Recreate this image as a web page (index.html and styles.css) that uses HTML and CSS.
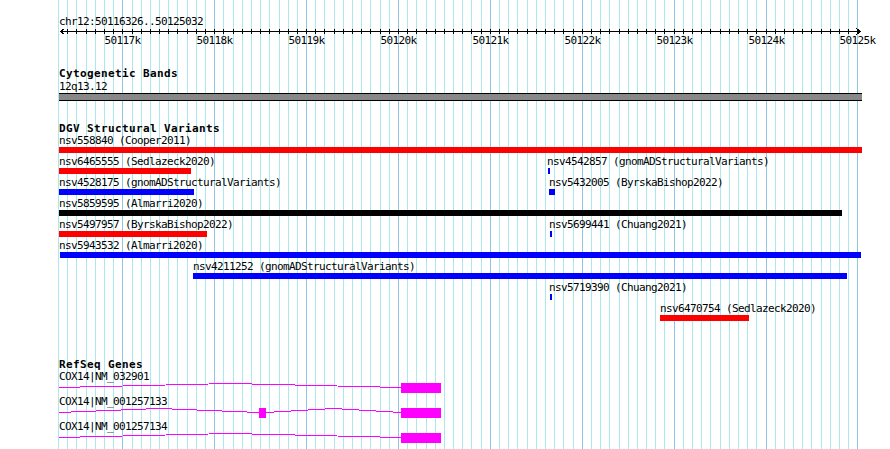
FILE: index.html
```html
<!DOCTYPE html>
<html>
  <head>
    <meta charset="UTF-8">
    <title>chr12:50116326..50125032</title>
    <link rel="stylesheet" href="styles.css">
  </head>
  <body>
    <div class="browser">
      <!-- grid: one line per 100bp, darker every 1kb -->
      <svg class="grid" width="890" height="449" shape-rendering="crispEdges">
        <path class="grid-minor" d="M58.5 0V449M67.5 0V449M76.5 0V449M86.5 0V449M95.5 0V449M104.5 0V449M113.5 0V449M132.5 0V449M141.5 0V449M150.5 0V449M159.5 0V449M168.5 0V449M177.5 0V449M187.5 0V449M196.5 0V449M205.5 0V449M223.5 0V449M233.5 0V449M242.5 0V449M251.5 0V449M260.5 0V449M269.5 0V449M279.5 0V449M288.5 0V449M297.5 0V449M315.5 0V449M324.5 0V449M334.5 0V449M343.5 0V449M352.5 0V449M361.5 0V449M370.5 0V449M380.5 0V449M389.5 0V449M407.5 0V449M416.5 0V449M426.5 0V449M435.5 0V449M444.5 0V449M453.5 0V449M462.5 0V449M471.5 0V449M481.5 0V449M499.5 0V449M508.5 0V449M517.5 0V449M527.5 0V449M536.5 0V449M545.5 0V449M554.5 0V449M563.5 0V449M573.5 0V449M591.5 0V449M600.5 0V449M609.5 0V449M619.5 0V449M628.5 0V449M637.5 0V449M646.5 0V449M655.5 0V449M664.5 0V449M683.5 0V449M692.5 0V449M701.5 0V449M710.5 0V449M720.5 0V449M729.5 0V449M738.5 0V449M747.5 0V449M756.5 0V449M775.5 0V449M784.5 0V449M793.5 0V449M802.5 0V449M811.5 0V449M821.5 0V449M830.5 0V449M839.5 0V449M848.5 0V449"/>
        <path class="grid-major" d="M122.5 0V449M214.5 0V449M306.5 0V449M398.5 0V449M490.5 0V449M582.5 0V449M674.5 0V449M766.5 0V449M857.5 0V449"/>
      </svg>

      <section class="ruler">
        <div class="ruler-title">chr12:50116326..50125032</div>
        <svg class="scale" width="890" height="18">
          <g class="axis" shape-rendering="crispEdges">
            <path d="M60 3.5H861M60.5 3.5L64.5 0.5M60.5 3.5L64.5 6.5M860.5 3.5L856.5 0.5M860.5 3.5L856.5 6.5"/>
            <path d="M67.5 1v5M76.5 1v5M86.5 1v5M95.5 1v5M104.5 1v5M113.5 1v5M122.5 1v5M132.5 1v5M141.5 1v5M150.5 1v5M159.5 1v5M168.5 1v5M177.5 1v5M187.5 1v5M196.5 1v5M205.5 1v5M214.5 1v5M223.5 1v5M233.5 1v5M242.5 1v5M251.5 1v5M260.5 1v5M269.5 1v5M279.5 1v5M288.5 1v5M297.5 1v5M306.5 1v5M315.5 1v5M324.5 1v5M334.5 1v5M343.5 1v5M352.5 1v5M361.5 1v5M370.5 1v5M380.5 1v5M389.5 1v5M398.5 1v5M407.5 1v5M416.5 1v5M426.5 1v5M435.5 1v5M444.5 1v5M453.5 1v5M462.5 1v5M471.5 1v5M481.5 1v5M490.5 1v5M499.5 1v5M508.5 1v5M517.5 1v5M527.5 1v5M536.5 1v5M545.5 1v5M554.5 1v5M563.5 1v5M573.5 1v5M582.5 1v5M591.5 1v5M600.5 1v5M609.5 1v5M619.5 1v5M628.5 1v5M637.5 1v5M646.5 1v5M655.5 1v5M664.5 1v5M674.5 1v5M683.5 1v5M692.5 1v5M701.5 1v5M710.5 1v5M720.5 1v5M729.5 1v5M738.5 1v5M747.5 1v5M756.5 1v5M766.5 1v5M775.5 1v5M784.5 1v5M793.5 1v5M802.5 1v5M811.5 1v5M821.5 1v5M830.5 1v5M839.5 1v5M848.5 1v5M857.5 1v5"/>
          </g>
          <g class="ticks">
            <text x="122.5" y="15.5">50117k</text>
            <text x="214.5" y="15.5">50118k</text>
            <text x="306.5" y="15.5">50119k</text>
            <text x="398.5" y="15.5">50120k</text>
            <text x="490.5" y="15.5">50121k</text>
            <text x="582.5" y="15.5">50122k</text>
            <text x="674.5" y="15.5">50123k</text>
            <text x="766.5" y="15.5">50124k</text>
            <text x="857.5" y="15.5">50125k</text>
          </g>
        </svg>
      </section>

      <section class="track bands">
        <h2 class="track-title">Cytogenetic Bands</h2>
        <div class="band-label">12q13.12</div>
        <div class="band-bar"></div>
      </section>

      <section class="track dgv">
        <h2 class="track-title">DGV Structural Variants</h2>
        <div class="sv-row">
          <div class="sv" style="left:59px"><span class="sv-label">nsv558840 (Cooper2011)</span><div class="sv-bar red" style="width:803px"></div></div>
        </div>
        <div class="sv-row">
          <div class="sv" style="left:59px"><span class="sv-label">nsv6465555 (Sedlazeck2020)</span><div class="sv-bar red" style="width:132px"></div></div>
          <div class="sv" style="left:547px"><span class="sv-label">nsv4542857 (gnomADStructuralVariants)</span><div class="sv-bar blue" style="width:2px;margin-left:1px"></div></div>
        </div>
        <div class="sv-row">
          <div class="sv" style="left:59px"><span class="sv-label">nsv4528175 (gnomADStructuralVariants)</span><div class="sv-bar blue" style="width:135px"></div></div>
          <div class="sv" style="left:549px"><span class="sv-label">nsv5432005 (ByrskaBishop2022)</span><div class="sv-bar blue" style="width:6px"></div></div>
        </div>
        <div class="sv-row">
          <div class="sv" style="left:59px"><span class="sv-label">nsv5859595 (Almarri2020)</span><div class="sv-bar black" style="width:783px"></div></div>
        </div>
        <div class="sv-row">
          <div class="sv" style="left:59px"><span class="sv-label">nsv5497957 (ByrskaBishop2022)</span><div class="sv-bar red" style="width:148px"></div></div>
          <div class="sv" style="left:549px"><span class="sv-label">nsv5699441 (Chuang2021)</span><div class="sv-bar blue" style="width:2px;margin-left:1px"></div></div>
        </div>
        <div class="sv-row">
          <div class="sv" style="left:59px"><span class="sv-label">nsv5943532 (Almarri2020)</span><div class="sv-bar blue" style="width:801px;margin-left:1px"></div></div>
        </div>
        <div class="sv-row">
          <div class="sv" style="left:193px"><span class="sv-label">nsv4211252 (gnomADStructuralVariants)</span><div class="sv-bar blue" style="width:654px"></div></div>
        </div>
        <div class="sv-row">
          <div class="sv" style="left:549px"><span class="sv-label">nsv5719390 (Chuang2021)</span><div class="sv-bar blue" style="width:2px;margin-left:1px"></div></div>
        </div>
        <div class="sv-row">
          <div class="sv" style="left:660px"><span class="sv-label">nsv6470754 (Sedlazeck2020)</span><div class="sv-bar red" style="width:89px"></div></div>
        </div>
      </section>

      <section class="track genes">
        <h2 class="track-title">RefSeq Genes</h2>
        <div class="gene">
          <div class="gene-label">COX14|NM_032901</div>
          <svg class="gene-model" width="383" height="10" shape-rendering="crispEdges">
            <polyline points="0,4.5 171,0.5 342,4.5"/>
            <rect x="342" y="0" width="40" height="10"/>
          </svg>
        </div>
        <div class="gene">
          <div class="gene-label">COX14|NM_001257133</div>
          <svg class="gene-model" width="383" height="10" shape-rendering="crispEdges">
            <polyline points="0,4.5 100,0.5 200,4.5"/>
            <rect x="200" y="0" width="7" height="10"/>
            <polyline points="207,4.5 274.5,0.5 342,4.5"/>
            <rect x="342" y="0" width="40" height="10"/>
          </svg>
        </div>
        <div class="gene">
          <div class="gene-label">COX14|NM_001257134</div>
          <svg class="gene-model" width="383" height="10" shape-rendering="crispEdges">
            <polyline points="0,4.5 171,0.5 342,4.5"/>
            <rect x="342" y="0" width="40" height="10"/>
          </svg>
        </div>
      </section>
    </div>
  </body>
</html>
```

FILE: styles.css
```css
body {
  margin: 0;
  background: #fff;
  color: #000;
  font-family: "DejaVu Sans Mono", monospace;
  font-size: 11px;
  line-height: 13px;
  letter-spacing: -0.62px;
}
.browser {
  position: relative;
  z-index: 0;
  width: 890px;
  height: 449px;
  overflow: hidden;
}
.grid {
  position: absolute;
  left: 0;
  top: 0;
  z-index: -1;
}
.grid-minor {
  stroke: #aae8ee;
  stroke-width: 1;
}
.grid-major {
  stroke: #8ec6e6;
  stroke-width: 1;
}

/* ruler */
.ruler-title {
  margin: 15px 0 0 59px;
  height: 13px;
  white-space: nowrap;
}
.scale {
  display: block;
}
.axis path {
  stroke: #000;
  stroke-width: 1;
  fill: none;
}
.ticks text {
  fill: #000;
  text-anchor: middle;
}

/* tracks */
.track-title {
  margin: 0 0 0 59px;
  height: 12px;
  font-size: 11px;
  font-weight: bold;
  letter-spacing: 0.38px;
  white-space: nowrap;
}
.bands {
  margin-top: 21px;
}
.band-label {
  margin: 1px 0 0 59px;
  height: 13px;
}
.band-bar {
  margin-left: 59px;
  width: 803px;
  height: 6px;
  background: #888;
  border-top: 1px solid #000;
  border-bottom: 1px solid #000;
}

.dgv {
  margin-top: 21px;
}
.sv-row {
  position: relative;
  height: 21px;
}
.sv {
  position: absolute;
  top: 0;
}
.sv-label {
  display: block;
  height: 13px;
  white-space: nowrap;
}
.sv-bar {
  height: 6px;
}
.red {
  background: #f00;
}
.blue {
  background: #00f;
}
.black {
  background: #000;
}

.genes {
  margin-top: 35px;
}
.gene {
  height: 25px;
}
.gene-label {
  margin-left: 59px;
  height: 13px;
  white-space: nowrap;
}
.gene-model {
  display: block;
  margin-left: 59px;
}
.gene-model polyline {
  fill: none;
  stroke: #f0f;
  stroke-width: 1;
}
.gene-model rect {
  fill: #f0f;
}
```
